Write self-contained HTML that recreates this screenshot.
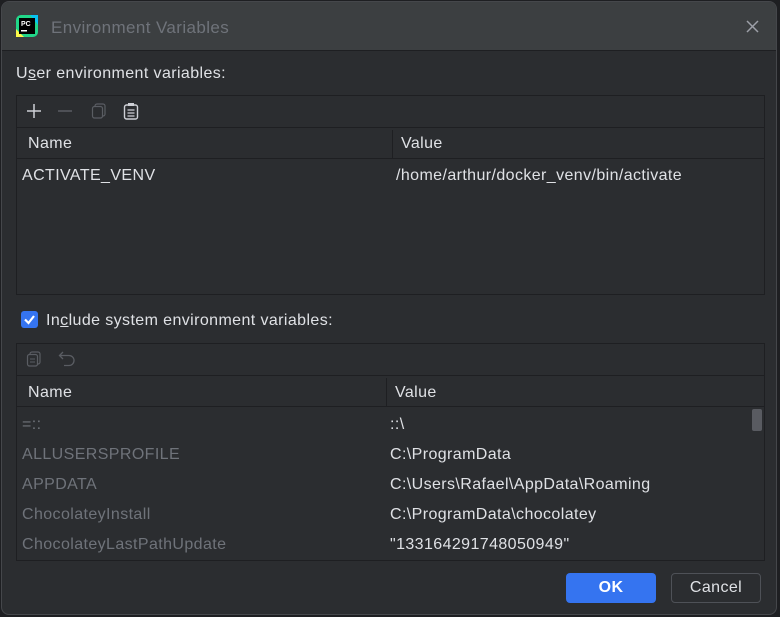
<!DOCTYPE html>
<html><head><style>
*{margin:0;padding:0;box-sizing:border-box}
body{width:780px;height:617px;background:#1e1f22;font-family:"Liberation Sans",sans-serif;font-size:16px;letter-spacing:0.4px;color:#dfe1e5;position:relative;overflow:hidden}
.dlg{position:absolute;left:1px;top:1px;width:776px;height:614px;background:#2b2d30;border:1px solid #45474b;border-radius:8px;overflow:hidden}
.title{position:absolute;left:0;top:0;right:0;height:49px;background:#3c3f41;border-bottom:1px solid #1e1f22}
.abs{position:absolute;white-space:nowrap}
.tbl{position:absolute;left:14px;width:749px;border:1px solid #1e1f22;background:#2b2d30}
.bar{position:absolute;left:0;right:0;border-bottom:1px solid #1e1f22}
.vl{position:absolute;width:1px;background:#1e1f22}
.dim{color:#6f737a}
</style></head><body>
<div class="dlg">
 <div class="title">
  <svg class="abs" style="left:14px;top:13px" width="22" height="22" viewBox="0 0 22 22">
   <rect x="0" y="0" width="22" height="22" rx="5" fill="#21d789"/>
   <path d="M0 14 L8 22 L0 22Z" fill="#fcf84a"/>
   <path d="M14 0 L22 0 L22 10Z" fill="#07c3f2"/>
   <rect x="3" y="3" width="16" height="16" fill="#000"/>
   <text x="5" y="11" font-size="7" font-weight="bold" fill="#fff" font-family="Liberation Sans" letter-spacing="0">PC</text>
   <rect x="5" y="15" width="6" height="1.5" fill="#fff"/>
  </svg>
  <div class="abs" style="left:49px;top:16px;font-size:17px;color:#6f737a">Environment Variables</div>
  <svg class="abs" style="left:744px;top:18px" width="13" height="13"><path d="M1 1L12 12M12 1L1 12" stroke="#9da0a8" stroke-width="1.5"/></svg>
 </div>
 <div class="abs" style="left:14px;top:63px">U<u>s</u>er environment variables:</div>
 <div class="tbl" style="top:93px;height:200px">
  <div class="bar" style="top:0;height:32px"></div>
  <svg class="abs" style="left:9px;top:7px" width="16" height="16"><path d="M8 1V15M1 8H15" stroke="#ced0d6" stroke-width="1.5"/></svg>
  <svg class="abs" style="left:40px;top:7px" width="16" height="16"><path d="M1 8H15" stroke="#5a5d63" stroke-width="1.5"/></svg>
  <svg class="abs" style="left:74px;top:7px" width="16" height="16"><rect x="4" y="1" width="10" height="12" rx="2" fill="none" stroke="#5a5d63" stroke-width="1.2"/><rect x="1.5" y="3.5" width="10" height="11.5" rx="2" fill="#2b2d30" stroke="#5a5d63" stroke-width="1.2"/></svg>
  <svg class="abs" style="left:106px;top:6px" width="16" height="18"><rect x="1.5" y="3" width="13" height="14" rx="2" fill="none" stroke="#ced0d6" stroke-width="1.4"/><rect x="5" y="1" width="6" height="3" fill="#ced0d6"/><path d="M4.5 8H11.5M4.5 11H11.5M4.5 14H11.5" stroke="#ced0d6" stroke-width="1.2"/></svg>
  <div class="bar" style="top:32px;height:31px"></div>
  <div class="vl" style="left:375px;top:34px;height:28px"></div>
  <div class="abs" style="left:11px;top:39px">Name</div>
  <div class="abs" style="left:384px;top:39px">Value</div>
  <div class="abs" style="left:5px;top:71px">ACTIVATE_VENV</div>
  <div class="abs" style="left:379px;top:71px">/home/arthur/docker_venv/bin/activate</div>
 </div>
 <div class="abs" style="left:19px;top:309px;width:17px;height:17px;background:#3574f0;border-radius:3px">
  <svg width="17" height="17"><path d="M4 8.5L7.5 12L13 5" stroke="#fff" stroke-width="2.2" fill="none"/></svg>
 </div>
 <div class="abs" style="left:44px;top:310px">In<u>c</u>lude system environment variables:</div>
 <div class="tbl" style="top:341px;height:218px">
  <div class="bar" style="top:0;height:32px"></div>
  <svg class="abs" style="left:9px;top:7px" width="16" height="16"><rect x="4" y="1" width="10" height="12" rx="2" fill="none" stroke="#5a5d63" stroke-width="1.2"/><rect x="1.5" y="3.5" width="10" height="11.5" rx="2" fill="#2b2d30" stroke="#5a5d63" stroke-width="1.2"/><path d="M4 8H9M4 11H9" stroke="#5a5d63"/></svg>
  <svg class="abs" style="left:41px;top:7px" width="18" height="16"><path d="M5 1L1.5 4.5L5 8M1.5 4.5H11A5 5 0 0 1 11 14.5H6" stroke="#5a5d63" stroke-width="1.3" fill="none"/></svg>
  <div class="bar" style="top:32px;height:31px"></div>
  <div class="vl" style="left:369px;top:34px;height:28px"></div>
  <div class="abs" style="left:11px;top:40px">Name</div>
  <div class="abs" style="left:378px;top:40px">Value</div>
  <div class="abs" style="left:735px;top:65px;width:10px;height:22px;background:#595b61;border-radius:2px"></div>
  <div class="abs dim" style="left:5px;top:72px">=::</div>
  <div class="abs" style="left:373px;top:72px">::\</div>
  <div class="abs dim" style="left:5px;top:102px">ALLUSERSPROFILE</div>
  <div class="abs" style="left:373px;top:102px">C:\ProgramData</div>
  <div class="abs dim" style="left:5px;top:132px">APPDATA</div>
  <div class="abs" style="left:373px;top:132px">C:\Users\Rafael\AppData\Roaming</div>
  <div class="abs dim" style="left:5px;top:162px">ChocolateyInstall</div>
  <div class="abs" style="left:373px;top:162px">C:\ProgramData\chocolatey</div>
  <div class="abs dim" style="left:5px;top:192px">ChocolateyLastPathUpdate</div>
  <div class="abs" style="left:373px;top:192px">"133164291748050949"</div>
 </div>
 <div class="abs" style="left:564px;top:571px;width:90px;height:30px;background:#3574f0;border-radius:4px;color:#fff;font-weight:bold;text-align:center;line-height:30px">OK</div>
 <div class="abs" style="left:669px;top:571px;width:90px;height:30px;border:1px solid #4e5157;border-radius:4px;text-align:center;line-height:28px">Cancel</div>
</div>
</body></html>
